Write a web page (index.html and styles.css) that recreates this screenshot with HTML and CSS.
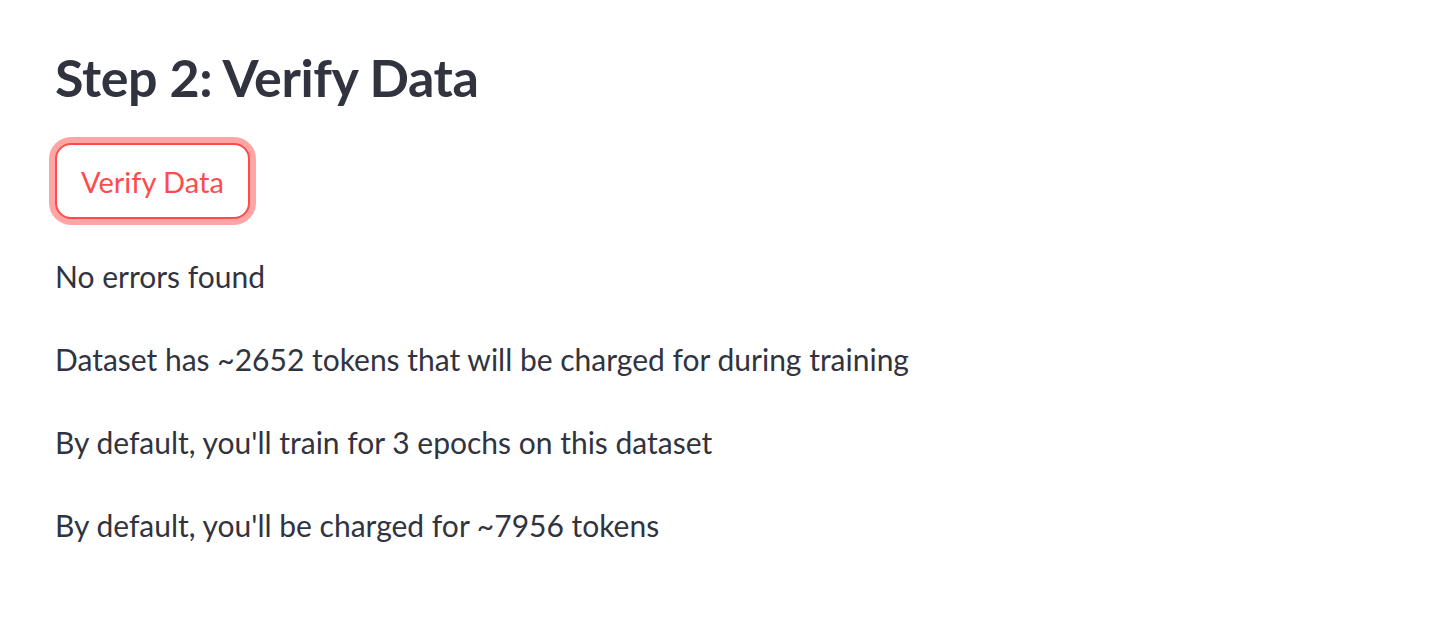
FILE: index.html
```html
<!DOCTYPE html>
<html lang="en">
<head>
<meta charset="utf-8">
<title>Step 2: Verify Data</title>
<link rel="stylesheet" href="styles.css">
</head>
<body>
<main class="page">
  <h2 class="title">Step 2: Verify Data</h2>
  <div class="btn-row"><button class="btn" type="button">Verify Data</button></div>
  <p class="text">No errors found</p>
  <p class="text">Dataset has ~2652 tokens that will be charged for during training</p>
  <p class="text">By default, you'll train for 3 epochs on this dataset</p>
  <p class="text">By default, you'll be charged for ~7956 tokens</p>
</main>
</body>
</html>
```
FILE: styles.css
```css
html, body {
  margin: 0;
  padding: 0;
  background: #ffffff;
}
body {
  font-family: Lato, "Liberation Sans", sans-serif;
  color: #31333f;
}
.page {
  display: flex;
  flex-direction: column;
  gap: 32px;
  padding: 44px 0 0 55px;
}
.title {
  margin: 0;
  font-size: 52px;
  line-height: 67px;
  font-weight: 700;
  color: #31333f;
  letter-spacing: -0.4px;
}
.btn-row {
  display: flex;
}
.btn {
  box-sizing: border-box;
  height: 76px;
  padding: 0 24px;
  border: 2px solid #ff4b4b;
  border-radius: 16px;
  background: #ffffff;
  color: #ff4b4b;
  font-family: inherit;
  font-size: 29px;
  box-shadow: 0 0 0 6px rgba(255, 75, 75, 0.5);
}
.text {
  margin: 0;
  font-size: 30px;
  line-height: 51px;
}
```
